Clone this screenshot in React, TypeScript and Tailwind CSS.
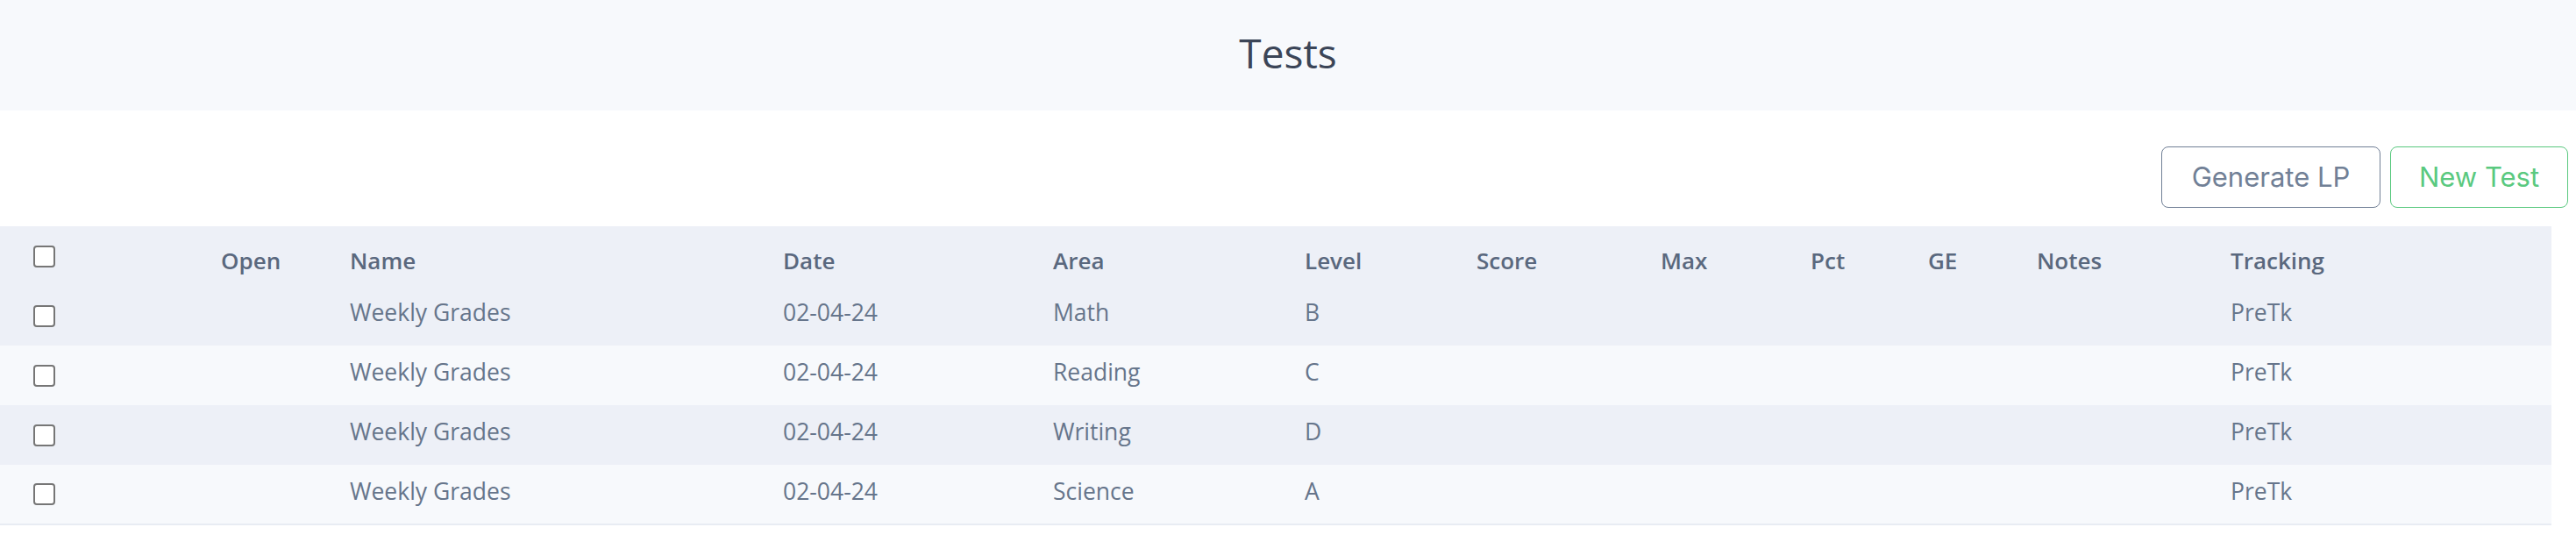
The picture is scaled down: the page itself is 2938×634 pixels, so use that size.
import React from "react"

type Row = {
  name: string
  date: string
  area: string
  level: string
  tracking: string
}

const rows: Row[] = [
  { name: "Weekly Grades", date: "02-04-24", area: "Math", level: "B", tracking: "PreTk" },
  { name: "Weekly Grades", date: "02-04-24", area: "Reading", level: "C", tracking: "PreTk" },
  { name: "Weekly Grades", date: "02-04-24", area: "Writing", level: "D", tracking: "PreTk" },
  { name: "Weekly Grades", date: "02-04-24", area: "Science", level: "A", tracking: "PreTk" },
]

const columns = ["Open", "Name", "Date", "Area", "Level", "Score", "Max", "Pct", "GE", "Notes", "Tracking"]

function Checkbox() {
  return (
    <input
      type="checkbox"
      className="appearance-none block w-[25px] h-[25px] ml-[38px] rounded-[4px] border-2 border-[#767676] bg-white"
    />
  )
}

export default function App() {
  return (
    <div className="min-h-screen bg-white font-['Open_Sans',sans-serif]">
      {/* Page title */}
      <div className="h-[126px] bg-[#f7f9fc] flex items-center justify-center">
        <h1 className="text-[46px] leading-none text-[#3b4557] pb-[6px]">Tests</h1>
      </div>

      {/* Actions */}
      <div className="flex justify-end gap-[11px] pt-[41px] pr-[9px]">
        <button className="h-[70px] w-[250px] rounded-[8px] border-[1.5px] border-[#718096] text-[#718096] text-[31px] font-['Inter',sans-serif]">
          Generate LP
        </button>
        <button className="h-[70px] w-[203px] rounded-[8px] border-[1.5px] border-[#5ac97f] text-[#5ac97f] text-[31px] font-['Inter',sans-serif]">
          New Test
        </button>
      </div>

      {/* Tests table */}
      <table className="mt-[21px] w-[2910px] table-fixed border-collapse text-[26.5px] leading-[37px]">
        <colgroup>
          <col className="w-[252px]" />
          <col className="w-[147px]" />
          <col className="w-[494px]" />
          <col className="w-[308px]" />
          <col className="w-[287px]" />
          <col className="w-[196px]" />
          <col className="w-[210px]" />
          <col className="w-[171px]" />
          <col className="w-[134px]" />
          <col className="w-[124px]" />
          <col className="w-[221px]" />
          <col className="w-[366px]" />
        </colgroup>
        <thead>
          <tr className="h-[68px] bg-[#edf0f7]">
            <th className="p-0 align-middle">
              <Checkbox />
            </th>
            {columns.map((c) => (
              <th key={c} className="p-0 pt-[21px] align-top text-left text-[26px] font-semibold text-[#5a687e]">
                {c}
              </th>
            ))}
          </tr>
        </thead>
        <tbody>
          {rows.map((r, i) => (
            <tr
              key={r.area}
              className={
                i % 2 === 0
                  ? "h-[68px] bg-[#edf0f7]"
                  : "h-[68px] bg-[#f7f9fc]" + (i === rows.length - 1 ? " border-b-2 border-[#e8ecf3]" : "")
              }
            >
              <td className="p-0 align-middle">
                <Checkbox />
              </td>
              <td className="p-0" />
              <td className="p-0 pt-[12px] align-top text-[#66758b]">{r.name}</td>
              <td className="p-0 pt-[12px] align-top text-[#66758b]">{r.date}</td>
              <td className="p-0 pt-[12px] align-top text-[#66758b]">{r.area}</td>
              <td className="p-0 pt-[12px] align-top text-[#66758b]">{r.level}</td>
              <td className="p-0" />
              <td className="p-0" />
              <td className="p-0" />
              <td className="p-0" />
              <td className="p-0" />
              <td className="p-0 pt-[12px] align-top text-[#66758b]">{r.tracking}</td>
            </tr>
          ))}
        </tbody>
      </table>
    </div>
  )
}
